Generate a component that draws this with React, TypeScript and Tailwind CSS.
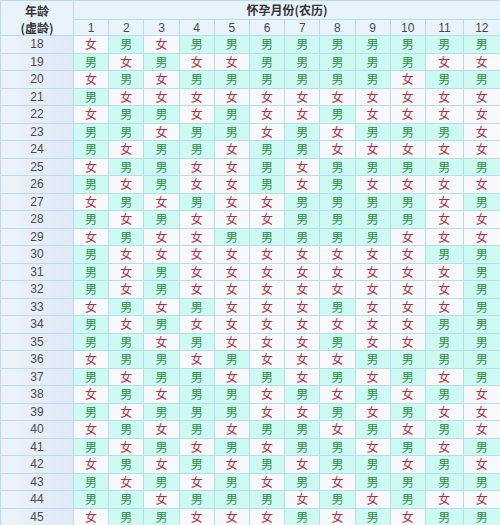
const rows: string[] = [
  "FMFMMMMMMMMM",
  "MFMFFMMMMMFF",
  "FMFMMMMMMFMM",
  "MFFFFFFFFFFF",
  "FMMFMFFMFFFF",
  "MMFMMFMFMMMF",
  "MFMMFMMFFFFF",
  "FMMFFMFMMMMM",
  "MFMFFMFMFFFF",
  "FMFMFFMMMMFM",
  "MFMFFFMMMMFF",
  "FMFFMMMMMFFF",
  "MFFFFFFFFFMM",
  "MFMFFFFFFFFM",
  "MFMFFFFFFFFM",
  "FMFMFFFMFFFM",
  "MFMFFFFFFFMM",
  "MMFMFFFMFFMM",
  "FMMFMFFFMMMM",
  "MFMMFMFMFMFM",
  "FMFMMFMFMFMF",
  "MFMMMFFMFMFF",
  "FMFMFMMFMFMF",
  "MFMFMFMMFMFM",
  "FMFMFMFMMFMF",
  "MFMFMFMFMMMM",
  "MMFMMMFMFMFF",
  "FMMFFFMFMFMM",
];

const months = Array.from({ length: 12 }, (_, i) => i + 1);

export default function App() {
  return (
    <div className="w-[500px] h-[525px] overflow-hidden bg-white font-['Liberation_Sans','Noto_Sans_CJK_SC',sans-serif] text-[12px]">
      <div className="grid grid-cols-[73px_repeat(10,35.2px)_38px_37px] grid-rows-[19px_16px_repeat(28,17.5px)] border-l border-t border-[#b6dcee]">
        {/* header */}
        <div className="flex items-center justify-center bg-[#e9f3fb] border-r border-[#b6dcee] font-bold text-[#333] font-['Noto_Sans_CJK_SC',sans-serif]">
          年龄
        </div>
        <div className="col-span-12 flex items-center justify-center bg-[#e9f3fb] border-r border-b border-[#b6dcee] font-bold text-[#333] font-['Noto_Sans_CJK_SC',sans-serif]">
          怀孕月份(农历)
        </div>
        <div className="flex items-center justify-center bg-[#e9f3fb] border-r border-b border-[#b6dcee] font-bold text-[#333] font-['Noto_Sans_CJK_SC',sans-serif]">
          (虚龄)
        </div>
        {months.map((m) => (
          <div key={m} className="flex items-center justify-center bg-[#e9f3fb] border-r border-b border-[#b6dcee] text-[#4a4a4a]">
            {m}
          </div>
        ))}

        {rows.map((r, i) => (
          <>
            <div key={`a${i}`} className="flex items-center justify-center bg-gradient-to-r from-[#eef3fa] to-[#e0e9f6] border-r border-b border-[#b6dcee] text-[#4a4a4a]">
              {18 + i}
            </div>
            {r.split("").map((c, j) =>
              c === "M" ? (
                <div key={`${i}-${j}`} className="flex items-center justify-center bg-[#cefaf4] border-r border-b border-[#b6dcee] text-[#2f8f3c] font-['Noto_Sans_CJK_SC',sans-serif]">
                  男
                </div>
              ) : (
                <div key={`${i}-${j}`} className="flex items-center justify-center bg-[#f8f9fc] border-r border-b border-[#b6dcee] text-[#b4303f] font-['Noto_Sans_CJK_SC',sans-serif]">
                  女
                </div>
              )
            )}
          </>
        ))}
      </div>
    </div>
  );
}
